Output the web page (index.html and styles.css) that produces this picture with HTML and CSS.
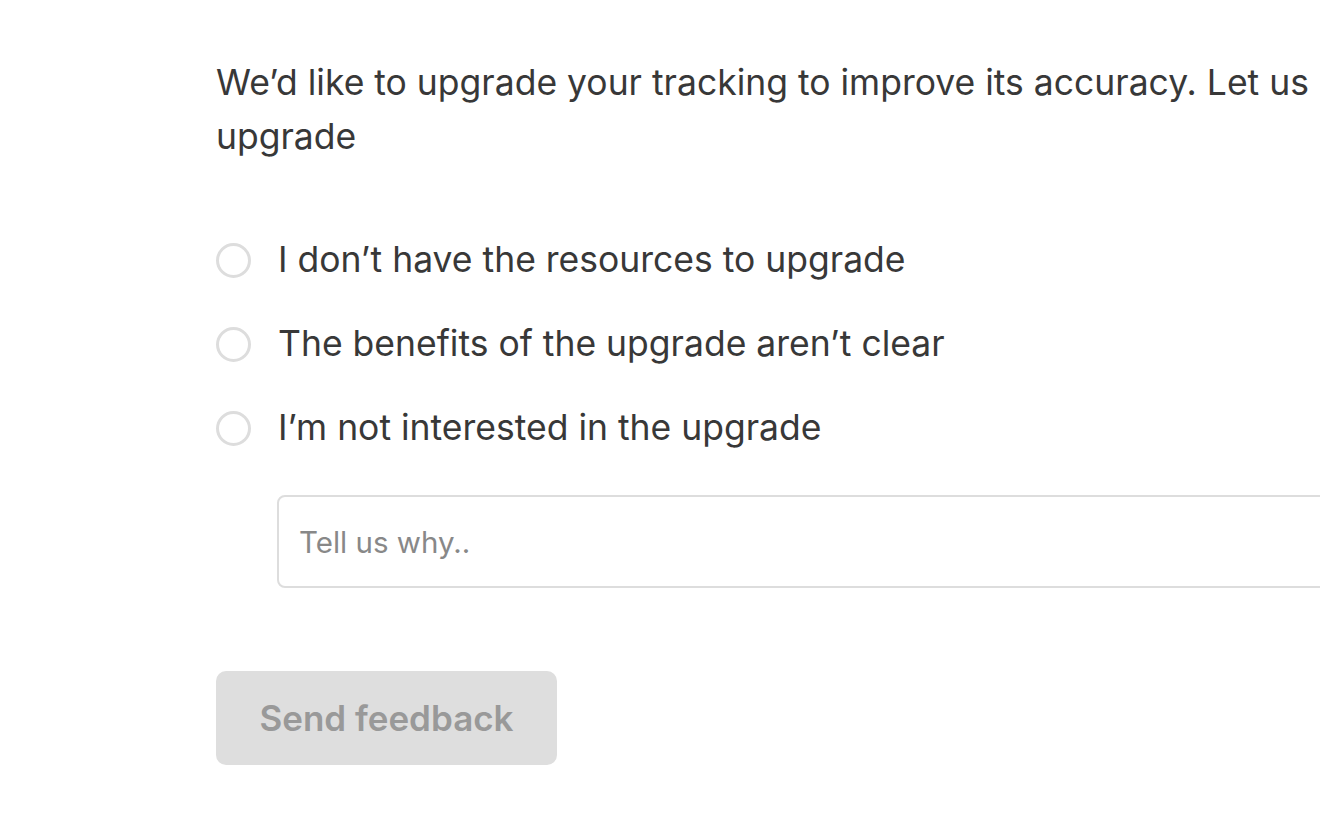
FILE: index.html
```html
<!DOCTYPE html>
<html lang="en">
<head>
  <meta charset="UTF-8">
  <meta name="viewport" content="width=device-width, initial-scale=1.0">
  <title>Upgrade feedback</title>
  <link rel="stylesheet" href="styles.css">
</head>
<body>
    <div class="feedback">
        <p class="intro">We’d like to upgrade your tracking to improve its accuracy. Let us upgrade</p>

        <form class="feedback-form">
            <div class="options">
                <label class="option">
                    <input type="radio" name="reason" value="resources">
                    <span>I don’t have the resources to upgrade</span>
                </label>
                <label class="option">
                    <input type="radio" name="reason" value="benefits">
                    <span>The benefits of the upgrade aren’t clear</span>
                </label>
                <label class="option">
                    <input type="radio" name="reason" value="interest">
                    <span>I’m not interested in the upgrade</span>
                </label>
            </div>

            <input type="text" class="why" placeholder="Tell us why..">

            <button type="button" class="send" disabled>Send feedback</button>
        </form>
    </div>
</body>
</html>
```

FILE: styles.css
```css
/* General Styling */
body {
    margin: 0;
    padding: 0;
    background: #ffffff;
    font-family: 'Inter', 'Noto Sans', sans-serif;
    color: #383838;
    overflow: hidden;
}

.feedback {
    width: 1160px;
    padding: 56px 0 0 216px;
}

.intro {
    margin: 0;
    font-size: 35.5px;
    line-height: 54px;
}

.feedback-form {
    display: flex;
    flex-direction: column;
    align-items: flex-start;
}

.options {
    display: flex;
    flex-direction: column;
    gap: 30px;
    margin-top: 69px;
}

.option {
    display: flex;
    align-items: center;
    gap: 27px;
    font-size: 35.5px;
    line-height: 54px;
    cursor: pointer;
}

.option input {
    appearance: none;
    width: 35px;
    height: 35px;
    margin: 0;
    border: 3px solid #dddddd;
    border-radius: 50%;
    background: #ffffff;
}

.why {
    box-sizing: border-box;
    width: 1150px;
    height: 93px;
    margin: 40px 0 0 61px;
    padding: 0 20px;
    border: 2px solid #dddddd;
    border-radius: 8px;
    font-family: 'Inter', sans-serif;
    font-size: 29.5px;
    color: #383838;
    outline: none;
}

.why::placeholder {
    color: #888888;
}

.send {
    width: 341px;
    height: 94px;
    margin-top: 83px;
    border: none;
    border-radius: 10px;
    background-color: #dedede;
    color: #999999;
    font-family: 'Inter', sans-serif;
    font-size: 35px;
    font-weight: 600;
}
```
